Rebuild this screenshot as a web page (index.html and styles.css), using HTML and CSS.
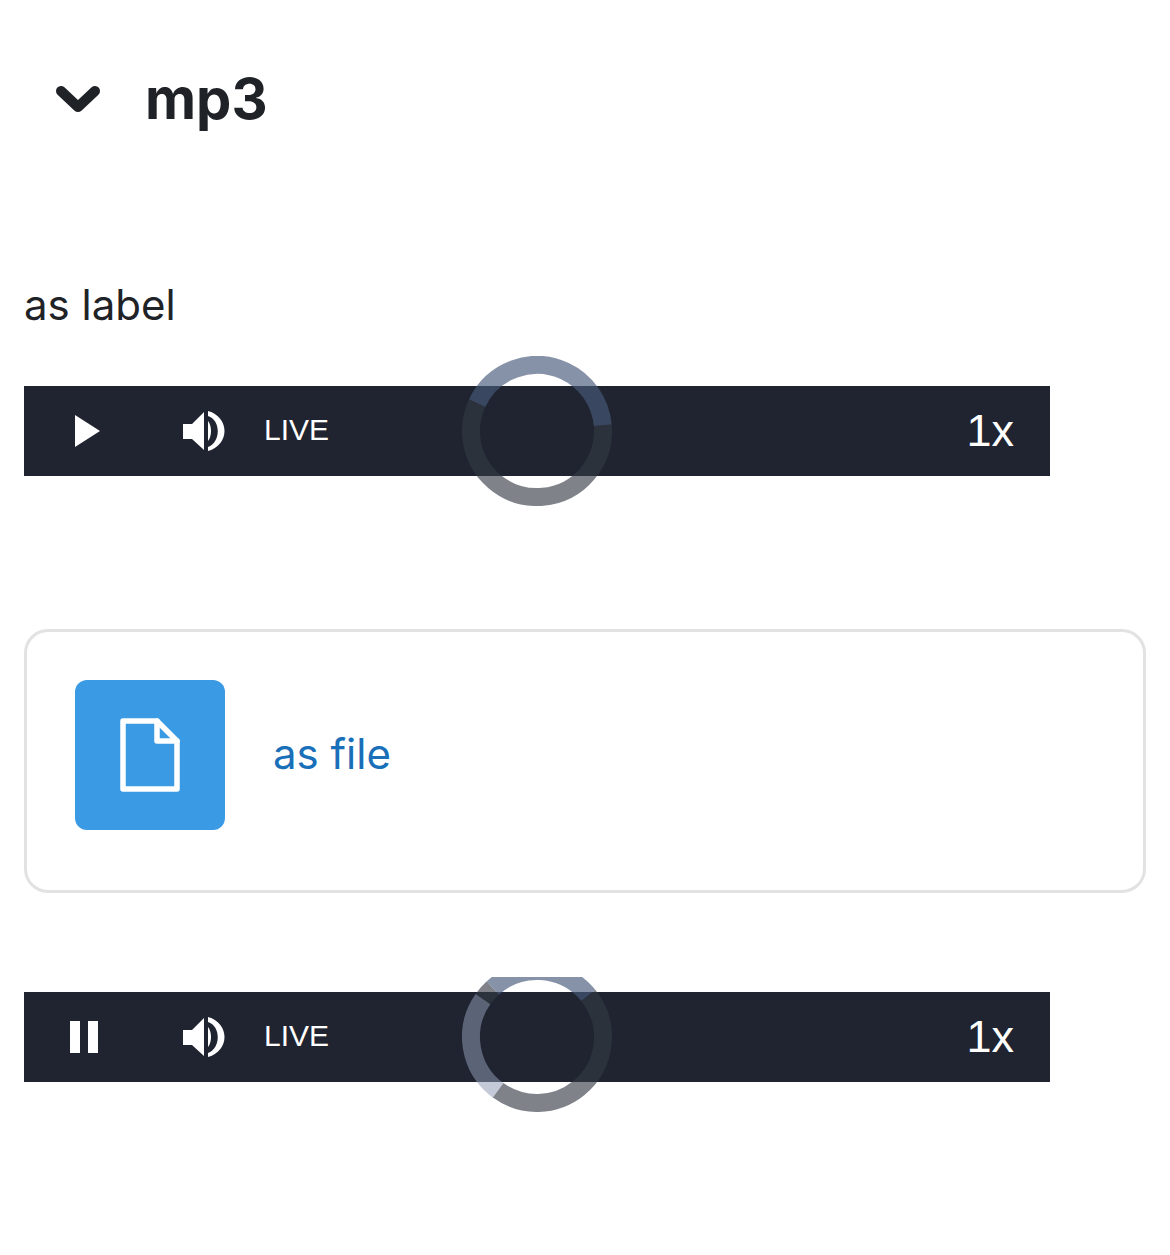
FILE: index.html
```html
<!DOCTYPE html>
<html lang="en">
<head>
<meta charset="UTF-8" />
<meta name="viewport" content="width=device-width, initial-scale=1" />
<title>mp3</title>
<link rel="stylesheet" href="styles.css">
</head>
<body>

<div class="page">
  <!-- Section heading -->
  <div class="heading">
    <svg class="chevron" width="44" height="28" viewBox="0 0 44 28">
      <path d="M5 6 L22 22 L39 6" />
    </svg>
    <h2>mp3</h2>
  </div>

  <p class="label">as label</p>

  <div class="player">
    <button class="btn-play" aria-label="Play">
      <svg width="25" height="32" viewBox="0 0 25 32"><path d="M0 0 L25 16 L0 32 Z" /></svg>
    </button>
    <button class="btn-volume" aria-label="Volume">
      <svg width="42" height="40" viewBox="0 0 42 40">
        <path d="M0 13 H9 L21 1 V39 L9 28 H0 Z" />
        <path d="M25 10 C29 15 29 25 25 30 Z" />
        <path d="M25 0 C47 6 47 34 25 40 L25 36 C38 31 38 9 25 5 Z" />
      </svg>
    </button>
    <span class="live">LIVE</span>
    <span class="speed">1x</span>
    <svg class="ring" width="150" height="150" viewBox="0 0 150 150">
      <circle class="ring-base" cx="75" cy="75" r="66" pathLength="360" stroke-dasharray="210 150" transform="rotate(-5 75 75)" />
      <circle class="ring-played" cx="75" cy="75" r="66" pathLength="360" stroke-dasharray="150 210" transform="rotate(-155 75 75)" />
    </svg>
  </div>

  <!-- File attachment -->
  <div class="file-card">
    <div class="file-icon">
      <svg width="60" height="74" viewBox="0 0 60 74">
        <path d="M3 3 H37 L57 23 V71 H3 Z" />
        <path d="M37 3 V23 H57" />
      </svg>
    </div>
    <a class="file-link" href="#">as file</a>
  </div>

  <div class="player player-second">
    <button class="btn-pause" aria-label="Pause"><span></span><span></span></button>
    <button class="btn-volume" aria-label="Volume">
      <svg width="42" height="40" viewBox="0 0 42 40">
        <path d="M0 13 H9 L21 1 V39 L9 28 H0 Z" />
        <path d="M25 10 C29 15 29 25 25 30 Z" />
        <path d="M25 0 C47 6 47 34 25 40 L25 36 C38 31 38 9 25 5 Z" />
      </svg>
    </button>
    <span class="live">LIVE</span>
    <span class="speed">1x</span>
    <!-- top of this ring is cut off by the viewBox -->
    <svg class="ring ring-cut" width="150" height="135" viewBox="0 15 150 135">
      <circle class="ring-base" cx="75" cy="75" r="66" pathLength="360" stroke-dasharray="165 195" transform="rotate(-39 75 75)" />
      <circle class="ring-base" cx="75" cy="75" r="66" pathLength="360" stroke-dasharray="13 347" transform="rotate(-145 75 75)" />
      <circle class="ring-played" cx="75" cy="75" r="66" pathLength="360" stroke-dasharray="93 267" transform="rotate(-132 75 75)" />
      <circle class="ring-buffer" cx="75" cy="75" r="66" pathLength="360" stroke-dasharray="89 271" transform="rotate(-234 75 75)" />
    </svg>
  </div>
</div>

</body>
</html>
```

FILE: styles.css
```css
/* Reset */
* {
  margin: 0; padding: 0; box-sizing: border-box;
}
body {
  background: #fff;
  color: #1f2327;
  font-family: 'Inter', 'Liberation Sans', sans-serif;
}
.page {
  padding: 68px 24px 173px;
}

/* Heading */
.heading {
  display: flex;
  align-items: center;
  height: 62px;
  padding-left: 32px;
}
.chevron {
  margin-right: 45px;
}
.chevron path {
  fill: none;
  stroke: #1f2327;
  stroke-width: 10;
  stroke-linecap: round;
  stroke-linejoin: round;
}
.heading h2 {
  font-size: 56px;
  font-weight: 700;
  line-height: 62px;
}
.label {
  margin-top: 145px;
  font-size: 42px;
  line-height: 60px;
  height: 60px;
}

/* Player */
.player {
  position: relative;
  display: flex;
  align-items: center;
  width: 1026px;
  height: 90px;
  margin-top: 51px;
  background: #1f2430;
  color: #fff;
  font-family: 'Liberation Sans', sans-serif;
}
.player button {
  display: flex;
  align-items: center;
  background: none;
  border: none;
}
.player svg path {
  fill: #fff;
}
.btn-play {
  margin-left: 51px;
  width: 108px;
}
.btn-pause {
  margin-left: 46px;
  width: 113px;
  gap: 8px;
}
.btn-pause span {
  display: block;
  width: 10px;
  height: 32px;
  background: #fff;
}
.live {
  margin-left: 39px;
  padding-bottom: 2px;
  font-size: 30px;
}
.speed {
  margin-left: auto;
  margin-right: 36px;
  font-size: 45px;
}
.btn-volume svg {
  display: block;
}

/* Progress ring over the bar */
.ring {
  position: absolute;
  left: 438px;
  top: -30px;
}
.ring-cut {
  top: -15px;
}
.ring circle {
  fill: none;
  stroke-width: 18;
}
.ring-base {
  stroke: rgba(53, 58, 68, 0.63);
}
.ring-played {
  stroke: rgba(72, 90, 122, 0.66);
}
.ring-buffer {
  stroke: rgba(145, 155, 181, 0.53);
}

/* File card */
.file-card {
  display: flex;
  align-items: center;
  width: 1122px;
  margin-top: 153px;
  padding: 48px 48px 60px;
  border: 3px solid #e2e2e2;
  border-radius: 24px;
}
.file-icon {
  display: flex;
  align-items: center;
  justify-content: center;
  width: 150px;
  height: 150px;
  border-radius: 12px;
  background: #3a9ae4;
}
.file-icon path {
  fill: none;
  stroke: #fff;
  stroke-width: 5.5;
  stroke-linecap: round;
  stroke-linejoin: round;
}
.file-link {
  margin-left: 48px;
  padding-bottom: 4px;
  font-size: 42px;
  color: #1a6fb9;
  text-decoration: none;
}
.player-second {
  margin-top: 99px;
}
```
